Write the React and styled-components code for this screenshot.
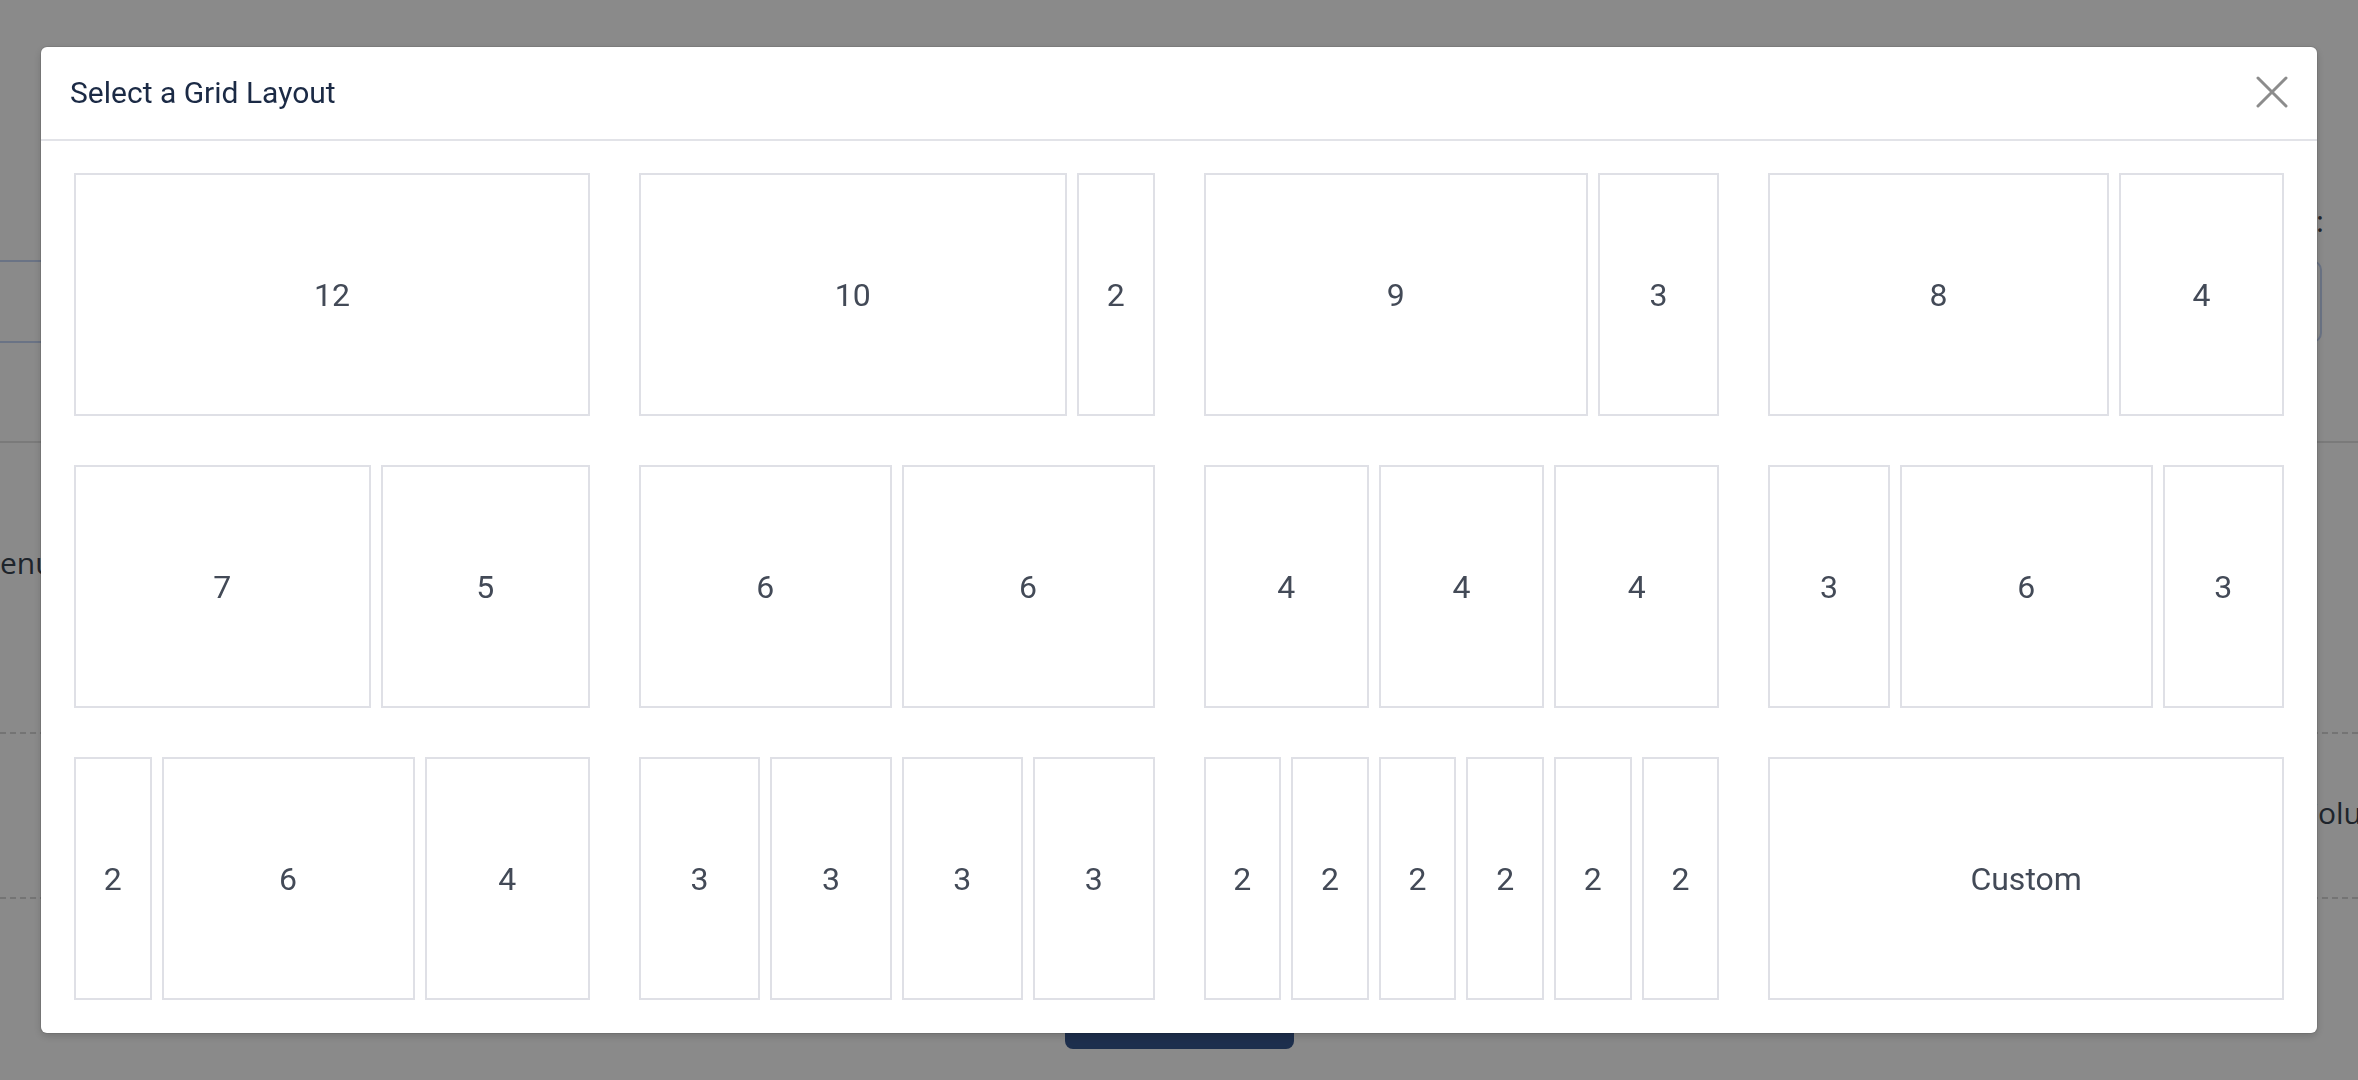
import React from 'react';
import styled, { createGlobalStyle } from 'styled-components';

const GlobalStyle = createGlobalStyle`
  html, body {
    margin: 0;
    padding: 0;
  }
  body {
    background: #ffffff;
    font-family: Roboto, "Open Sans", Arial, sans-serif;
    overflow: hidden;
  }
  * {
    box-sizing: border-box;
  }
`;

// ---- page behind the dialog ----

const Page = styled.div`
  width: 2358px;
  height: 1080px;
  padding-top: 201px;
  font-family: "Open Sans", Arial, sans-serif;
  color: #394351;
  overflow: hidden;
`;

const FieldLabel = styled.div`
  height: 40px;
  line-height: 40px;
  font-size: 30px;
  text-align: right;
  padding-right: 34px;
`;

const FieldInput = styled.div`
  height: 83px;
  margin: 19px 36px 0 -12px;
  border: 2px solid #c5d5f5;
  border-radius: 10px;
`;

const Divider = styled.div`
  height: 2px;
  margin-top: 98px;
  background: #e2e2e2;
`;

const MenuRow = styled.div`
  height: 289px;
  padding-top: 99px;
  margin-left: -27px;
  font-size: 30px;
  line-height: 42px;
`;

const ColumnRow = styled.div`
  display: grid;
  grid-template-columns: 2299px 1fr;
  height: 167px;
  padding-top: 58px;
  border-top: 2px dashed #d6d6d6;
  border-bottom: 2px dashed #d6d6d6;
  font-size: 30px;
  line-height: 42px;
  white-space: nowrap;
`;

const SaveButton = styled.button`
  display: block;
  width: 229px;
  height: 60px;
  margin: 90px auto 0;
  border: none;
  border-radius: 8px;
  background: #37578f;
`;

// ---- dialog ----

const Overlay = styled.div`
  position: fixed;
  inset: 0;
  padding: 47px 41px;
  background: rgba(0, 0, 0, 0.46);
`;

const Dialog = styled.div`
  background: #ffffff;
  border-radius: 6px;
  box-shadow: 0 0 0 1px rgba(0, 0, 0, 0.08), 0 3px 8px rgba(0, 0, 0, 0.18);
  overflow: hidden;
`;

const Header = styled.div`
  display: flex;
  align-items: center;
  justify-content: space-between;
  height: 94px;
  padding: 0 29px 2px 29px;
  border-bottom: 2px solid #e2e3e8;
`;

const Title = styled.h2`
  margin: 0;
  font-family: Roboto, Arial, sans-serif;
  font-size: 30px;
  font-weight: 400;
  color: #1b2a45;
`;

const CloseButton = styled.button`
  display: flex;
  padding: 0;
  border: none;
  background: none;
  cursor: pointer;
`;

const Body = styled.div`
  display: grid;
  grid-template-columns: repeat(4, 1fr);
  gap: 49px 49px;
  padding: 32px 33px 33px;
`;

const Layout = styled.div`
  display: grid;
  grid-template-columns: repeat(12, 1fr);
  gap: 10px;
  cursor: pointer;
`;

const Cell = styled.div`
  grid-column: span ${p => p.span};
  display: flex;
  align-items: center;
  justify-content: center;
  height: 243px;
  border: 2px solid #dfe0e6;
  font-family: Roboto, Arial, sans-serif;
  font-size: 32px;
  color: #434a57;
`;

const LAYOUTS = [
  [12],
  [10, 2],
  [9, 3],
  [8, 4],
  [7, 5],
  [6, 6],
  [4, 4, 4],
  [3, 6, 3],
  [2, 6, 4],
  [3, 3, 3, 3],
  [2, 2, 2, 2, 2, 2],
  ['Custom'],
];

const CloseIcon = () => (
  <svg width="32" height="32" viewBox="0 0 32 32">
    <path
      d="M2 2 L30 30 M30 2 L2 30"
      stroke="#8c8c8c"
      strokeWidth="3"
      strokeLinecap="round"
      fill="none"
    />
  </svg>
);

const App = () => (
  <>
    <GlobalStyle />
    <Page>
      <FieldLabel>Number of columns:</FieldLabel>
      <FieldInput />
      <Divider />
      <MenuRow>Menu</MenuRow>
      <ColumnRow>
        <span />
        <span>Columns</span>
      </ColumnRow>
      <SaveButton />
    </Page>
    <Overlay>
      <Dialog>
        <Header>
          <Title>Select a Grid Layout</Title>
          <CloseButton aria-label="Close">
            <CloseIcon />
          </CloseButton>
        </Header>
        <Body>
          {LAYOUTS.map((cols, i) => (
            <Layout key={i}>
              {cols.map((col, j) => (
                <Cell key={j} span={typeof col === 'number' ? col : 12}>
                  {col}
                </Cell>
              ))}
            </Layout>
          ))}
        </Body>
      </Dialog>
    </Overlay>
  </>
);

export default App;
